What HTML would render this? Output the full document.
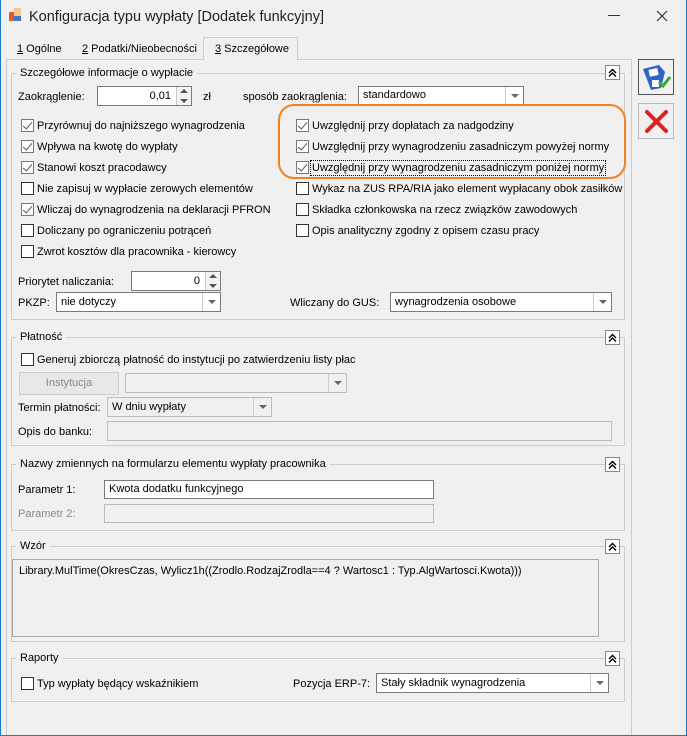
<!DOCTYPE html>
<html><head><meta charset="utf-8"><style>
*{box-sizing:border-box}
body{margin:0;width:687px;height:736px;overflow:hidden;background:#f0f0f0;font-family:"Liberation Sans",sans-serif;font-size:11px;color:#000}
.a{position:absolute;white-space:nowrap}
.t{position:absolute;white-space:nowrap;line-height:14px}
.cb{position:absolute;width:13px;height:13px;border:1px solid #333;background:#fff}
.cb.c{border-color:#777}
.cb.c::after{content:"";position:absolute;left:3px;top:0px;width:4px;height:8px;border:solid #555;border-width:0 1.5px 1.5px 0;transform:rotate(40deg)}
.in{position:absolute;background:#fff;border:1px solid #7a7a7a;height:20px;line-height:18px;padding:0 4px}
.dis{background:#f0f0f0;border-color:#bbb;color:#888}
.dd{position:absolute;right:0;top:0;width:18px;height:100%;border-left:1px solid #ccc}
.dd::after{content:"";position:absolute;left:5px;top:7px;border:4px solid transparent;border-top:4px solid #666}
.grp{position:absolute;border:1px solid #ccc}
.gl{position:absolute;background:#f0f0f0;padding:0 4px;top:-8px;left:4px;line-height:14px}
.col{position:absolute;width:15px;height:15px;border:1px solid #888;background:#fff}
.spin{position:absolute;right:0;top:0;width:15px;height:100%;border-left:1px solid #ccc;background:#f4f4f4}
.spin::before{content:"";position:absolute;left:3px;top:2px;border:4px solid transparent;border-bottom:4px solid #555;border-top:0}
.spin::after{content:"";position:absolute;left:3px;bottom:2px;border:4px solid transparent;border-top:4px solid #555;border-bottom:0}
</style></head><body>
<svg width="0" height="0" style="position:absolute"><defs><symbol id="ch" viewBox="0 0 13 13"><path d="M3 7 L6.5 3.5 L10 7 M3 10.5 L6.5 7 L10 10.5" stroke="#000" stroke-width="1.4" fill="none"/></symbol></defs></svg>
<div class="a" style="left:0;top:0;width:687px;height:736px;border:1px solid #1979ca;border-top:none"></div>
<!-- title -->
<div class="a" style="left:9px;top:12px;width:5px;height:9px;background:#e05a2b"></div>
<div class="a" style="left:14px;top:8px;width:7px;height:8px;background:#f5c88a"></div>
<div class="a" style="left:14px;top:16px;width:7px;height:5px;background:#3c78c8"></div>
<div class="t" style="left:29px;top:8px;font-size:14.5px;line-height:18px;color:#222">Konfiguracja typu wypłaty [Dodatek funkcyjny]</div>
<div class="a" style="left:608px;top:15px;width:12px;height:1px;background:#333"></div>
<svg class="a" style="left:656px;top:10px" width="12" height="12"><path d="M1 1 L11 11 M11 1 L1 11" stroke="#333" stroke-width="1.2"/></svg>
<!-- tabs -->
<div class="t" style="left:17px;top:42px"><u>1</u> Ogólne</div>
<div class="t" style="left:82px;top:42px"><u>2</u> Podatki/Nieobecności</div>
<div class="a" style="left:203px;top:37px;width:95px;height:23px;border:1px solid #ccc;border-bottom:none;background:#f0f0f0;z-index:2"></div>
<div class="t" style="left:215px;top:42px;z-index:3"><u>3</u> Szczegółowe</div>
<div class="a" style="left:6px;top:59px;width:626px;height:676px;border:1px solid #ccc;border-bottom:none"></div>
<!-- buttons -->
<div class="a" style="left:638px;top:59px;width:36px;height:36px;border:1px solid #555;background:#f0f0f0">
<svg width="34" height="34"><path d="M4 9 L20 5 L26 12 L22 28 L12 30 Z" fill="#2f63c9"/><rect x="10" y="9" width="9" height="7" fill="#fff" transform="rotate(-12 14 12)"/><rect x="13" y="20" width="7" height="7" fill="#fff"/><path d="M20 22 l4 4 l7 -9" stroke="#3aa53a" stroke-width="3" fill="none"/></svg></div>
<div class="a" style="left:638px;top:103px;width:36px;height:36px;border:1px solid #bbb;background:#f0f0f0">
<svg width="34" height="34"><path d="M8 8 L27 27 M27 8 L8 27" stroke="#e02020" stroke-width="4" stroke-linecap="round"/></svg></div>

<!-- group 1 -->
<div class="grp" style="left:11px;top:73px;width:614px;height:247px"><div class="gl">Szczegółowe informacje o wypłacie</div></div>
<svg class="col" style="left:605px;top:65px"><use href="#ch" width="13" height="13"/></svg>
<div class="t" style="left:18px;top:90px">Zaokrąglenie:</div>
<div class="in" style="left:97px;top:86px;width:95px;text-align:right;padding-right:20px">0,01<div class="spin"></div></div>
<div class="t" style="left:203px;top:90px">zł</div>
<div class="t" style="left:243px;top:90px">sposób zaokrąglenia:</div>
<div class="in" style="left:358px;top:86px;width:166px;height:19px;line-height:17px">standardowo<div class="dd"></div></div>

<div class="a" style="left:278px;top:104px;width:348px;height:75px;border:2.5px solid #f58220;border-radius:16px"></div>

<div class="cb c" style="left:21px;top:119px"></div><div class="t" style="left:37px;top:119px">Przyrównuj do najniższego wynagrodzenia</div>
<div class="cb c" style="left:21px;top:140px"></div><div class="t" style="left:37px;top:140px">Wpływa na kwotę do wypłaty</div>
<div class="cb c" style="left:21px;top:161px"></div><div class="t" style="left:37px;top:161px">Stanowi koszt pracodawcy</div>
<div class="cb" style="left:21px;top:182px"></div><div class="t" style="left:37px;top:182px">Nie zapisuj w wypłacie zerowych elementów</div>
<div class="cb c" style="left:21px;top:203px"></div><div class="t" style="left:37px;top:203px">Wliczaj do wynagrodzenia na deklaracji PFRON</div>
<div class="cb" style="left:21px;top:224px"></div><div class="t" style="left:37px;top:224px">Doliczany po ograniczeniu potrąceń</div>
<div class="cb" style="left:21px;top:245px"></div><div class="t" style="left:37px;top:245px">Zwrot kosztów dla pracownika - kierowcy</div>

<div class="cb c" style="left:296px;top:119px"></div><div class="t" style="left:312px;top:119px">Uwzględnij przy dopłatach za nadgodziny</div>
<div class="cb c" style="left:296px;top:140px"></div><div class="t" style="left:312px;top:140px">Uwzględnij przy wynagrodzeniu zasadniczym powyżej normy</div>
<div class="cb c" style="left:296px;top:161px"></div><div class="t" style="left:310px;top:160px;border:1px dotted #000;padding:0 1px">Uwzględnij przy wynagrodzeniu zasadniczym poniżej normy</div>
<div class="cb" style="left:296px;top:182px"></div><div class="t" style="left:312px;top:182px">Wykaz na ZUS RPA/RIA jako element wypłacany obok zasiłków</div>
<div class="cb" style="left:296px;top:203px"></div><div class="t" style="left:312px;top:203px">Składka członkowska na rzecz związków zawodowych</div>
<div class="cb" style="left:296px;top:224px"></div><div class="t" style="left:312px;top:224px">Opis analityczny zgodny z opisem czasu pracy</div>

<div class="t" style="left:18px;top:275px">Priorytet naliczania:</div>
<div class="in" style="left:131px;top:271px;width:90px;text-align:right;padding-right:20px">0<div class="spin"></div></div>
<div class="t" style="left:18px;top:296px">PKZP:</div>
<div class="in" style="left:56px;top:292px;width:165px">nie dotyczy<div class="dd"></div></div>
<div class="t" style="left:290px;top:296px">Wliczany do GUS:</div>
<div class="in" style="left:390px;top:292px;width:222px">wynagrodzenia osobowe<div class="dd"></div></div>

<!-- platnosc -->
<div class="grp" style="left:11px;top:337px;width:614px;height:109px"><div class="gl">Płatność</div></div>
<svg class="col" style="left:605px;top:330px"><use href="#ch" width="13" height="13"/></svg>
<div class="cb" style="left:21px;top:353px"></div><div class="t" style="left:37px;top:353px">Generuj zbiorczą płatność do instytucji po zatwierdzeniu listy płac</div>
<div class="a" style="left:19px;top:372px;width:100px;height:23px;border:1px solid #ccc;background:#e8e8e8;color:#888;text-align:center;line-height:21px">Instytucja</div>
<div class="in dis" style="left:125px;top:373px;width:222px"><div class="dd"></div></div>
<div class="t" style="left:18px;top:401px">Termin płatności:</div>
<div class="in dis" style="left:107px;top:397px;width:165px;color:#000">W dniu wypłaty<div class="dd"></div></div>
<div class="t" style="left:18px;top:425px">Opis do banku:</div>
<div class="in dis" style="left:107px;top:421px;width:505px"></div>

<!-- nazwy -->
<div class="grp" style="left:11px;top:464px;width:614px;height:67px"><div class="gl">Nazwy zmiennych na formularzu elementu wypłaty pracownika</div></div>
<svg class="col" style="left:605px;top:457px"><use href="#ch" width="13" height="13"/></svg>
<div class="t" style="left:18px;top:483px">Parametr 1:</div>
<div class="in" style="left:104px;top:480px;width:330px;height:19px;line-height:17px">Kwota dodatku funkcyjnego</div>
<div class="t" style="left:18px;top:507px;color:#888">Parametr 2:</div>
<div class="in dis" style="left:104px;top:504px;width:330px;height:19px"></div>

<!-- wzor -->
<div class="grp" style="left:11px;top:546px;width:614px;height:96px"><div class="gl">Wzór</div></div>
<svg class="col" style="left:605px;top:539px"><use href="#ch" width="13" height="13"/></svg>
<div class="a" style="left:12px;top:559px;width:587px;height:78px;border:1px solid #aaa;padding:4px 6px;line-height:14px">Library.MulTime(OkresCzas, Wylicz1h((Zrodlo.RodzajZrodla==4 ? Wartosc1 : Typ.AlgWartosci.Kwota)))</div>

<!-- raporty -->
<div class="grp" style="left:11px;top:658px;width:614px;height:44px"><div class="gl">Raporty</div></div>
<svg class="col" style="left:605px;top:651px"><use href="#ch" width="13" height="13"/></svg>
<div class="cb" style="left:21px;top:677px"></div><div class="t" style="left:37px;top:677px">Typ wypłaty będący wskaźnikiem</div>
<div class="t" style="left:293px;top:677px">Pozycja ERP-7:</div>
<div class="in" style="left:376px;top:673px;width:233px">Stały składnik wynagrodzenia<div class="dd"></div></div>
</body></html>
